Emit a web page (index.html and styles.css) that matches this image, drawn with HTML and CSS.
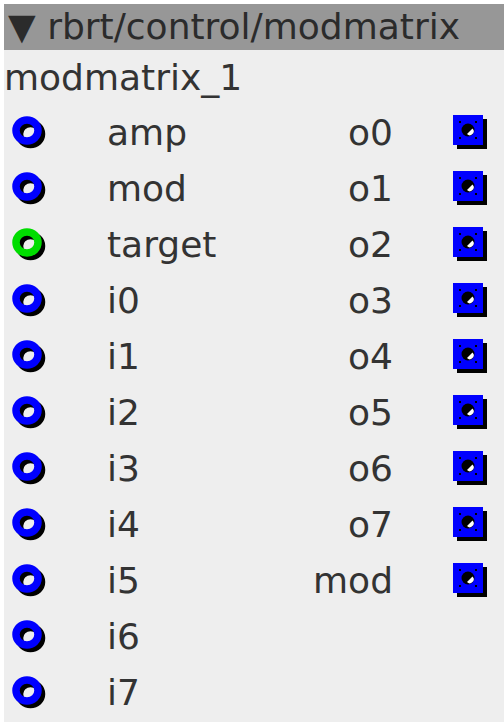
FILE: index.html
```html
<!DOCTYPE html>
<html>
<head>
<meta charset="utf-8">
<link rel="stylesheet" href="styles.css">
</head>
<body>
<div class="panel">
  <div class="header">▼ rbrt/control/modmatrix</div>
  <div class="name">modmatrix_1</div>
  <div class="io">
    <div class="inlets">
      <div class="row"><svg class="inlet" viewBox="0 0 36 36"><use href="#in-blue"/></svg><span class="label">amp</span></div>
      <div class="row"><svg class="inlet" viewBox="0 0 36 36"><use href="#in-blue"/></svg><span class="label">mod</span></div>
      <div class="row"><svg class="inlet" viewBox="0 0 36 36"><use href="#in-green"/></svg><span class="label">target</span></div>
      <div class="row"><svg class="inlet" viewBox="0 0 36 36"><use href="#in-blue"/></svg><span class="label">i0</span></div>
      <div class="row"><svg class="inlet" viewBox="0 0 36 36"><use href="#in-blue"/></svg><span class="label">i1</span></div>
      <div class="row"><svg class="inlet" viewBox="0 0 36 36"><use href="#in-blue"/></svg><span class="label">i2</span></div>
      <div class="row"><svg class="inlet" viewBox="0 0 36 36"><use href="#in-blue"/></svg><span class="label">i3</span></div>
      <div class="row"><svg class="inlet" viewBox="0 0 36 36"><use href="#in-blue"/></svg><span class="label">i4</span></div>
      <div class="row"><svg class="inlet" viewBox="0 0 36 36"><use href="#in-blue"/></svg><span class="label">i5</span></div>
      <div class="row"><svg class="inlet" viewBox="0 0 36 36"><use href="#in-blue"/></svg><span class="label">i6</span></div>
      <div class="row"><svg class="inlet" viewBox="0 0 36 36"><use href="#in-blue"/></svg><span class="label">i7</span></div>
    </div>
    <div class="outlets">
      <div class="row"><span class="label">o0</span><svg class="outlet" viewBox="0 0 36 36"><use href="#out"/></svg></div>
      <div class="row"><span class="label">o1</span><svg class="outlet" viewBox="0 0 36 36"><use href="#out"/></svg></div>
      <div class="row"><span class="label">o2</span><svg class="outlet" viewBox="0 0 36 36"><use href="#out"/></svg></div>
      <div class="row"><span class="label">o3</span><svg class="outlet" viewBox="0 0 36 36"><use href="#out"/></svg></div>
      <div class="row"><span class="label">o4</span><svg class="outlet" viewBox="0 0 36 36"><use href="#out"/></svg></div>
      <div class="row"><span class="label">o5</span><svg class="outlet" viewBox="0 0 36 36"><use href="#out"/></svg></div>
      <div class="row"><span class="label">o6</span><svg class="outlet" viewBox="0 0 36 36"><use href="#out"/></svg></div>
      <div class="row"><span class="label">o7</span><svg class="outlet" viewBox="0 0 36 36"><use href="#out"/></svg></div>
      <div class="row"><span class="label">mod</span><svg class="outlet" viewBox="0 0 36 36"><use href="#out"/></svg></div>
    </div>
  </div>
</div>
<svg class="defs" width="0" height="0">
  <defs>
    <g id="in-blue">
      <ellipse cx="18.5" cy="19" rx="11" ry="10.5" fill="none" stroke="#000" stroke-width="7.5"/>
      <ellipse cx="15" cy="15.5" rx="11" ry="10.5" fill="none" stroke="#0000ff" stroke-width="7.5"/>
    </g>
    <g id="in-green">
      <ellipse cx="18.5" cy="19" rx="11" ry="10.5" fill="none" stroke="#000" stroke-width="7.5"/>
      <ellipse cx="15" cy="15.5" rx="11" ry="10.5" fill="none" stroke="#00dd00" stroke-width="7.5"/>
    </g>
    <g id="out">
      <rect x="4" y="4" width="30" height="30" fill="#000"/>
      <rect x="0" y="0" width="30" height="30" fill="#0000ff"/>
      <rect x="6" y="6" width="2" height="2" fill="#000"/>
      <rect x="22" y="6" width="2" height="2" fill="#000"/>
      <rect x="6" y="22" width="2" height="2" fill="#000"/>
      <rect x="22" y="22" width="2" height="2" fill="#000"/>
      <circle cx="15" cy="15" r="6.5" fill="#000"/>
      <path d="M14 19 L19.5 13.5 A3.5 3.5 0 0 1 14 19 Z" fill="#fff"/>
    </g>
  </defs>
</svg>
</body>
</html>
```
FILE: styles.css
```css
html, body {
  margin: 0;
  padding: 0;
  background: #ffffff;
  overflow: hidden;
}

.panel {
  margin: 4px 0 0 4px;
  width: 500px;
  height: 718px;
  background: #eeeeee;
  font-family: "DejaVu Sans", sans-serif;
  font-size: 36px;
  color: #333333;
}

.header {
  height: 46px;
  line-height: 46px;
  background: #979797;
  padding-left: 4px;
  white-space: nowrap;
  color: #2b2b2b;
}

.name {
  height: 55px;
  line-height: 55px;
  padding-left: 0;
}

.io {
  display: flex;
  justify-content: space-between;
}

.inlets,
.outlets {
  display: flex;
  flex-direction: column;
}

.outlets {
  align-items: flex-end;
  padding-right: 15px;
}

.row {
  height: 56px;
  display: flex;
  align-items: center;
}

.inlet {
  width: 36px;
  height: 36px;
  margin-left: 8px;
  margin-right: 59px;
}

.outlet {
  width: 36px;
  height: 36px;
  margin-left: 60px;
}

.label {
  line-height: 56px;
}

.defs {
  position: absolute;
  width: 0;
  height: 0;
}
```
